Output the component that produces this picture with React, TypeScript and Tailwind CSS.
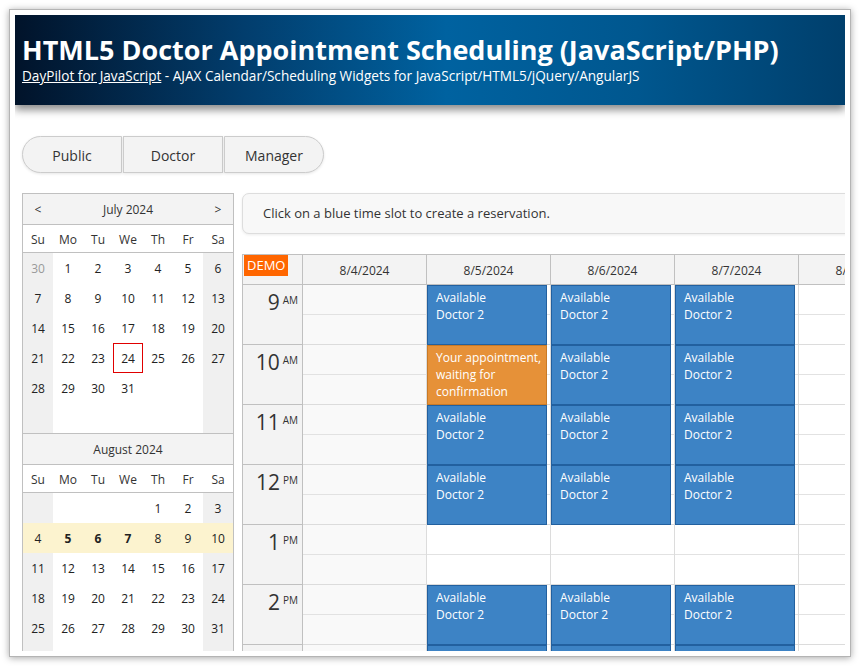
import React from "react";

type Cell = { t: string; grey?: boolean; bold?: boolean; today?: boolean };

const dows = ["Su", "Mo", "Tu", "We", "Th", "Fr", "Sa"];

function mk(list: (number | string | null)[]): Cell[] {
  return list.map((v) => ({ t: v === null ? "" : String(v) }));
}

const julyRows: Cell[][] = [
  [{ t: "30", grey: true }, ...mk([1, 2, 3, 4, 5, 6])],
  mk([7, 8, 9, 10, 11, 12, 13]),
  mk([14, 15, 16, 17, 18, 19, 20]),
  mk([21, 22, 23, 24, 25, 26, 27]).map((c) => (c.t === "24" ? { ...c, today: true } : c)),
  mk([28, 29, 30, 31, null, null, null]),
  mk([null, null, null, null, null, null, null]),
];

const augRows: Cell[][] = [
  mk([null, null, null, null, 1, 2, 3]),
  mk([4, 5, 6, 7, 8, 9, 10]).map((c) => (["5", "6", "7"].includes(c.t) ? { ...c, bold: true } : c)),
  mk([11, 12, 13, 14, 15, 16, 17]),
  mk([18, 19, 20, 21, 22, 23, 24]),
  mk([25, 26, 27, 28, 29, 30, 31]),
  mk([null, null, null, null, null, null, null]),
];

function Month({ title, rows, arrows, hiRow }: { title: string; rows: Cell[][]; arrows?: boolean; hiRow?: number }) {
  return (
    <div className="border-b border-[#c0c0c0]">
      <div className="h-[31px] border-b border-[#c0c0c0] bg-[#f3f3f3] flex items-center pt-[2px] text-[12px] text-[#333]">
        <div className="w-[30px] text-center">{arrows ? "<" : ""}</div>
        <div className="flex-1 text-center">{title}</div>
        <div className="w-[30px] text-center">{arrows ? ">" : ""}</div>
      </div>
      <div className="h-[28px] border-b border-[#c0c0c0] bg-white flex text-[12px] text-[#333]">
        {dows.map((d) => (
          <div key={d} className="w-[30px] flex items-center justify-center pt-[2px]">
            {d}
          </div>
        ))}
      </div>
      {rows.map((r, ri) => (
        <div key={ri} className="flex h-[30px]">
          {r.map((c, ci) => {
            const weekend = ci === 0 || ci === 6;
            const bg = hiRow === ri ? "bg-[#fcf3cf]" : weekend ? "bg-[#f0f0f0]" : "bg-white";
            return (
              <div
                key={ci}
                className={`w-[30px] h-[30px] flex items-center justify-center pt-[2px] text-[12px] ${bg} ${
                  c.grey ? "text-[#999]" : "text-[#222]"
                } ${c.bold ? "font-bold" : ""} ${c.today ? "border border-[#e00000]" : ""}`}
              >
                {c.t}
              </div>
            );
          })}
        </div>
      ))}
    </div>
  );
}

const hours = [
  { h: "9", ap: "AM" },
  { h: "10", ap: "AM" },
  { h: "11", ap: "AM" },
  { h: "12", ap: "PM" },
  { h: "1", ap: "PM" },
  { h: "2", ap: "PM" },
  { h: "3", ap: "PM" },
];
const dates = ["8/4/2024", "8/5/2024", "8/6/2024", "8/7/2024", "8/8/2024"];

function eventFor(hi: number, di: number): "blue" | "orange" | null {
  if (di < 1 || di > 3) return null;
  if (hi === 4) return null;
  if (hi === 1 && di === 1) return "orange";
  return "blue";
}

function Event({ kind }: { kind: "blue" | "orange" }) {
  const cls =
    kind === "blue" ? "bg-[#3d83c5] border-[#22609f]" : "bg-[#e69138] border-[#c97a26]";
  return (
    <div
      className={`absolute top-0 left-0 w-[120px] h-[60px] border ${cls} text-white text-[12px] leading-[17px] pl-[8px] pt-[3px] z-10 whitespace-nowrap overflow-hidden`}
    >
      {kind === "blue" ? (
        <>
          <div>Available</div>
          <div>Doctor 2</div>
        </>
      ) : (
        <>
          <div>Your appointment,</div>
          <div>waiting for</div>
          <div>confirmation</div>
        </>
      )}
    </div>
  );
}

export default function App() {
  return (
    <div className="w-[860px] h-[666px] bg-white pt-[9px] pl-[9px] font-['Open_Sans',sans-serif] overflow-hidden">
      <div className="w-[842px] h-[648px] border border-[#b4b4b4] bg-white p-[5px] shadow-[0_1px_7px_rgba(0,0,0,0.35)]">
        <div className="w-[830px] h-[636px] overflow-hidden bg-white">
          {/* Header */}
          <div className="relative z-20 h-[90px] pl-[7px] pt-[20px] bg-[linear-gradient(90deg,#01132a_0%,#023e6e_28%,#0062a0_52%,#00578f_75%,#003f6c_100%)] shadow-[0_5px_8px_rgba(0,0,0,0.45)] text-white">
            <div className="text-[27px] leading-[30px] font-bold whitespace-nowrap">
              HTML5 Doctor Appointment Scheduling (JavaScript/PHP)
            </div>
            <div className="text-[13.6px] leading-[16px] mt-[3px] whitespace-nowrap">
              <span className="underline">DayPilot for JavaScript</span> - AJAX Calendar/Scheduling Widgets for
              JavaScript/HTML5/jQuery/AngularJS
            </div>
          </div>

          {/* Body */}
          <div className="px-[7px] pt-[31px]">
            <div className="flex gap-[1px] h-[37px]">
              {["Public", "Doctor", "Manager"].map((b, i) => (
                <div
                  key={b}
                  className={`w-[100px] h-[37px] border border-[#cccccc] bg-[#f3f3f3] flex items-center justify-center pt-[1px] text-[14px] text-[#333] shadow-[0_1px_3px_rgba(0,0,0,0.1)] ${
                    i === 0 ? "rounded-l-full" : ""
                  } ${i === 2 ? "rounded-r-full" : ""}`}
                >
                  {b}
                </div>
              ))}
            </div>

            <div className="flex mt-[20px]">
              {/* Navigator */}
              <div className="w-[212px] shrink-0 border-x border-t border-[#c0c0c0]">
                <Month title="July 2024" rows={julyRows} arrows />
                <Month title="August 2024" rows={augRows} hiRow={1} />
              </div>

              {/* Right column */}
              <div className="ml-[8px] w-[700px] shrink-0">
                <div className="h-[41px] border border-[#dddddd] bg-[#f8f8f8] rounded-[7px] flex items-center pl-[20px] pt-[1px] text-[13px] text-[#333] shadow-[0_1px_3px_rgba(0,0,0,0.08)]">
                  Click on a blue time slot to create a reservation.
                </div>

                <div className="mt-[20px]">
                  {/* header row */}
                  <div className="flex h-[31px] border-y border-[#c0c0c0] bg-[#f3f3f3]">
                    <div className="relative w-[61px] shrink-0 border-x border-[#c0c0c0]">
                      <div className="absolute top-0 left-[1px] h-[21px] px-[3px] bg-[#ff6600] text-white text-[13px] leading-[21px]">
                        DEMO
                      </div>
                    </div>
                    {dates.map((d) => (
                      <div
                        key={d}
                        className="w-[124px] shrink-0 border-r border-[#c0c0c0] flex items-center justify-center pt-[3px] text-[12px] text-[#333]"
                      >
                        {d}
                      </div>
                    ))}
                  </div>

                  {hours.map((hr, hi) => (
                    <div key={hi} className="flex h-[60px]">
                      <div className="w-[61px] shrink-0 h-[60px] border-x border-b border-[#c0c0c0] bg-[#f3f3f3] flex justify-end items-start pr-[4px] pt-[7px] text-[#333]">
                        <span className="text-[21px] leading-[21px]">{hr.h}</span>
                        <span className="text-[10px] leading-[10px] ml-[3px] mt-[3px]">{hr.ap}</span>
                      </div>
                      {dates.map((d, di) => {
                        const ev = eventFor(hi, di);
                        return (
                          <div
                            key={d}
                            className={`relative w-[124px] shrink-0 h-[60px] border-r border-b border-[#dcdcdc] ${
                              di === 0 ? "bg-[#f9f9f9]" : "bg-white"
                            }`}
                          >
                            <div className="h-[30px] border-b border-[#e2e2e2]" />
                            {ev && <Event kind={ev} />}
                          </div>
                        );
                      })}
                    </div>
                  ))}
                </div>
              </div>
            </div>
          </div>
        </div>
      </div>
    </div>
  );
}
